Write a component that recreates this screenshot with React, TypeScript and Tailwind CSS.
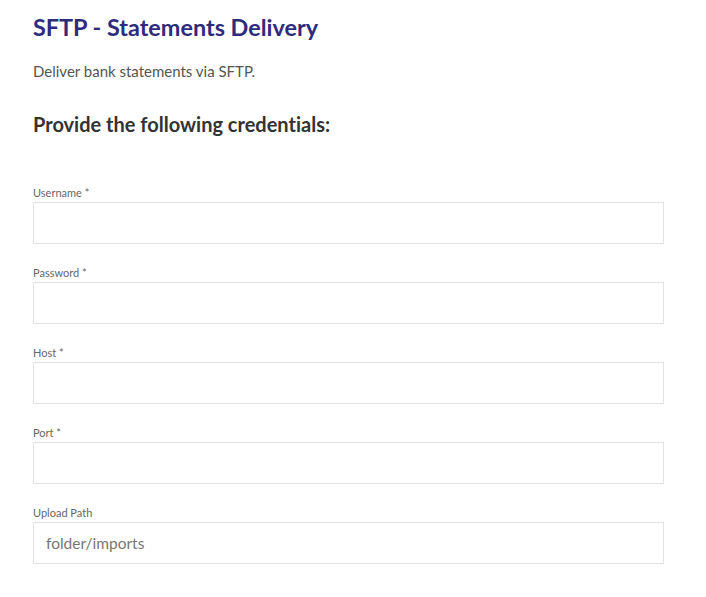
export default function App() {
  const fields = [
    { label: "Username *", placeholder: "" },
    { label: "Password *", placeholder: "" },
    { label: "Host *", placeholder: "" },
    { label: "Port *", placeholder: "" },
    { label: "Upload Path", placeholder: "folder/imports" },
  ];
  return (
    <div className="min-h-[597px] w-[706px] bg-white pl-[33px] pr-[42px] pt-[12px] [font-variant-ligatures:none] [font-feature-settings:'liga'_0,'clig'_0,'dlig'_0,'calt'_0]" style={{ fontFamily: "Lato, 'Open Sans', sans-serif" }}>
      <h1 className="text-[23.4px] font-bold leading-[30px] text-[#2f2b7c]">SFTP - Statements Delivery</h1>
      <p className="mt-[19px] text-[15px] leading-[20px] text-[#555555]">Deliver bank statements via SFTP.</p>
      <h2 className="mt-[30px] text-[20px] font-bold leading-[26px] text-[#333333]">Provide the following credentials:</h2>
      <div className="mt-[48px] flex flex-col gap-[21px]">
        {fields.map((f) => (
          <div key={f.label} className="flex flex-col">
            <label className="text-[11px] leading-[16px] text-[#666666]">{f.label}</label>
            <input
              className="mt-[1px] h-[42px] w-[631px] border border-[#e2e2e2] bg-white px-[12px] text-[15.5px] text-[#333] placeholder:text-[#777777] outline-none"
              placeholder={f.placeholder}
              style={{ fontFamily: "Lato, sans-serif" }}
            />
          </div>
        ))}
      </div>
    </div>
  );
}
